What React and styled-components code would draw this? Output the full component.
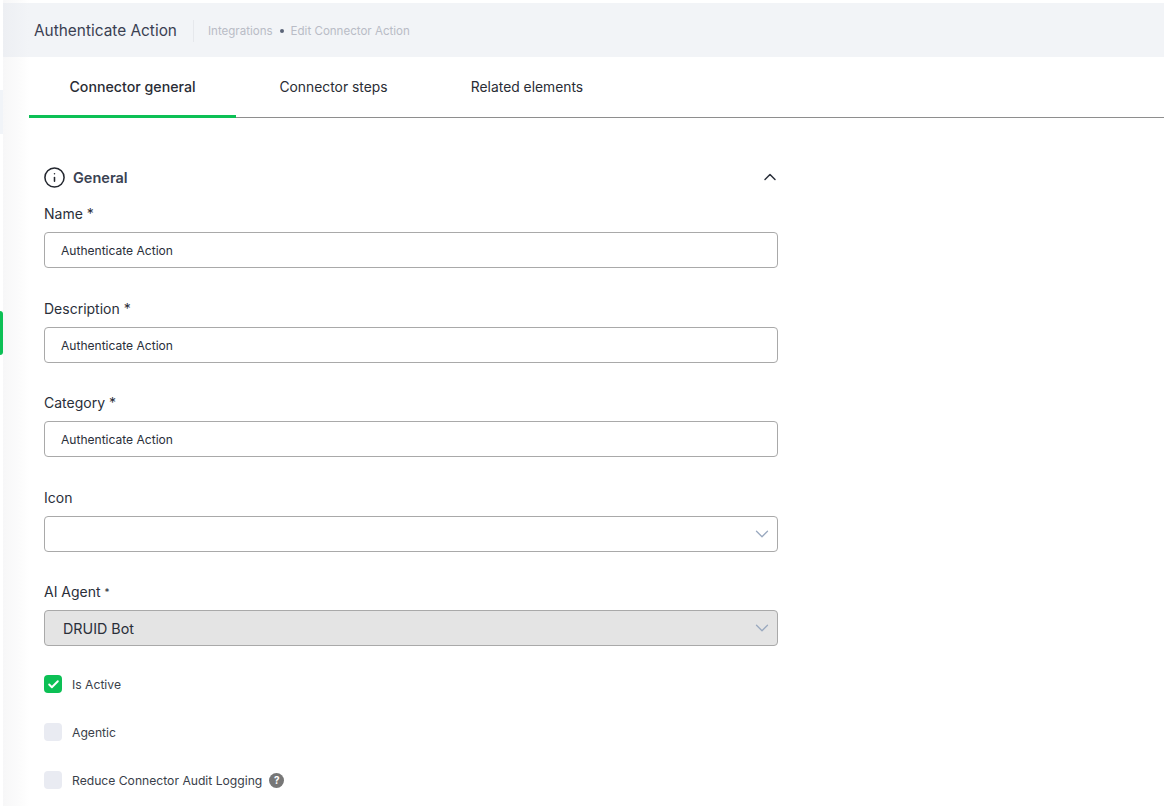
import React from "react";
import styled, { createGlobalStyle } from "styled-components";
import { Check, ChevronDown, ChevronUp, Info } from "lucide-react";

const Global = createGlobalStyle`
  html, body { margin: 0; padding: 0; background: #fff; overflow: hidden; }
  body { font-family: "Inter", "Liberation Sans", sans-serif; color: #2a2f3a; }
`;

const Page = styled.div`
  display: flex;
  width: 1164px;
  height: 806px;
  overflow: hidden;
`;
const Rail = styled.aside`
  position: relative;
  width: 3px;
  flex: none;
  background: #fff;
`;
const RailItem = styled.span`
  position: absolute;
  left: 0;
  top: 90px;
  width: 3px;
  height: 44px;
  background: #f1f4f8;
`;
const RailActive = styled.span`
  position: absolute;
  left: 0;
  top: 311px;
  width: 3px;
  height: 44px;
  background: #0cc055;
  border-radius: 0 4px 4px 0;
`;
const Main = styled.main`
  flex: 1;
  padding-top: 3px;
  min-width: 0;
  background: linear-gradient(90deg, #f7f7f8 0, #fcfcfc 18px, #fff 26px);
`;
const Header = styled.header`
  height: 54px;
  box-sizing: border-box;
  padding: 2px 0 0 31px;
  display: flex;
  align-items: center;
  background: linear-gradient(90deg, #edeff3 0, #f2f4f7 26px);
`;
const Title = styled.h1`
  margin: 0;
  font-size: 15.4px;
  font-weight: 400;
  color: #3a3f52;
  padding-right: 16px;
  border-right: 1px solid #e6e8ec;
  line-height: 22px;
`;
const Crumbs = styled.nav`
  display: flex;
  align-items: center;
  gap: 7px;
  margin-left: 14px;
  font-size: 11.55px;
  color: #b9bcc6;
`;
const Dot = styled.span`
  width: 4px;
  height: 4px;
  border-radius: 50%;
  background: #5b6478;
`;
const Tabs = styled.div`
  display: flex;
  margin-left: 26px;
  height: 61px;
  border-bottom: 1px solid #8e8e8e;
  box-sizing: border-box;
  background: #fff;
`;
const Tab = styled.div`
  width: ${(p) => p.$w}px;
  display: flex;
  align-items: center;
  justify-content: center;
  font-size: ${(p) => (p.$active ? 14.2 : 13.85)}px;
  color: #2a2d35;
  font-weight: ${(p) => (p.$active ? 500 : 400)};
  box-sizing: border-box;
  height: 61px;
  padding-bottom: 2px;
  padding-top: ${(p) => (p.$active ? 3 : 0)}px;
  border-bottom: ${(p) => (p.$active ? "3px solid #0cc055" : "none")};
`;
const Form = styled.section`
  width: 734px;
  margin-left: 41px;
  padding-top: 47px;
`;
const SectionHead = styled.div`
  display: flex;
  align-items: center;
  justify-content: space-between;
  height: 24px;
  margin-bottom: 13px;
`;
const SectionTitle = styled.div`
  display: flex;
  align-items: center;
  gap: 7px;
  font-size: 14.5px;
  font-weight: 600;
  color: #3a4252;
`;
const InfoIcon = styled(Info)`
  margin-left: -1px;
  color: #23272f;
`;
const Collapse = styled(ChevronUp)`
  color: #2a2f3a;
  margin-right: -2px;
`;
const Field = styled.div`
  margin-bottom: ${(p) => p.$mb}px;
`;
const Label = styled.label`
  display: block;
  font-size: 14px;
  line-height: 24px;
  margin-bottom: 6px;
  color: #2a2f3a;
`;
const Small = styled.span`
  font-size: 10px;
  vertical-align: 1px;
`;
const Box = styled.div`
  height: 36px;
  box-sizing: border-box;
  border: 1px solid #a9a9a9;
  border-radius: 4px;
  display: flex;
  align-items: center;
  justify-content: space-between;
  padding: 0 4px 0 ${(p) => (p.$disabled ? 18 : 16)}px;
  font-size: ${(p) => (p.$disabled ? 14.3 : 12.05)}px;
  background: ${(p) => (p.$disabled ? "#e4e4e4" : "#fff")};
  color: #2a2f3a;
`;
const CheckRow = styled.div`
  display: flex;
  align-items: center;
  gap: 10px;
  height: 18px;
  margin-bottom: 30px;
  font-size: 12.15px;
  color: #3a3f4a;
`;
const CheckBox = styled.span`
  width: 18px;
  height: 18px;
  border-radius: 4px;
  display: flex;
  align-items: center;
  justify-content: center;
  background: ${(p) => (p.$on ? "#0cc055" : "#e9ebf2")};
`;
const Help = styled.span`
  width: 15px;
  height: 15px;
  border-radius: 50%;
  background: #777;
  color: #fff;
  font-size: 10px;
  font-weight: 700;
  display: flex;
  align-items: center;
  justify-content: center;
  margin-left: -3px;
`;
const Chev = styled(ChevronDown)`
  color: #9aa9bf;
`;

const fields = [
  ["Name *", "Authenticate Action", 29],
  ["Description *", "Authenticate Action", 28],
  ["Category *", "Authenticate Action", 29],
];

export default function App() {
  return (
    <Page>
      <Global />
      <Rail><RailItem /><RailActive /></Rail>
      <Main>
        <Header>
          <Title>Authenticate Action</Title>
          <Crumbs>
            <span>Integrations</span>
            <Dot />
            <span>Edit Connector Action</span>
          </Crumbs>
        </Header>
        <Tabs>
          <Tab $active $w={207}>Connector general</Tab>
          <Tab $w={195}>Connector steps</Tab>
          <Tab $w={192}>Related elements</Tab>
        </Tabs>
        <Form>
          <SectionHead>
            <SectionTitle>
              <InfoIcon size={23} strokeWidth={1.6} />
              General
            </SectionTitle>
            <Collapse size={20} strokeWidth={1.8} />
          </SectionHead>
          {fields.map(([l, v, mb]) => (
            <Field key={l} $mb={mb}>
              <Label>{l}</Label>
              <Box>{v}</Box>
            </Field>
          ))}
          <Field $mb={28}>
            <Label>Icon</Label>
            <Box><span /><Chev size={22} strokeWidth={1.4} /></Box>
          </Field>
          <Field $mb={29}>
            <Label>AI Agent <Small>*</Small></Label>
            <Box $disabled>DRUID Bot<Chev size={22} strokeWidth={1.4} /></Box>
          </Field>
          <CheckRow>
            <CheckBox $on><Check size={13} strokeWidth={3.5} color="#fff" /></CheckBox>
            Is Active
          </CheckRow>
          <CheckRow>
            <CheckBox />
            Agentic
          </CheckRow>
          <CheckRow>
            <CheckBox />
            Reduce Connector Audit Logging
            <Help>?</Help>
          </CheckRow>
        </Form>
      </Main>
    </Page>
  );
}
